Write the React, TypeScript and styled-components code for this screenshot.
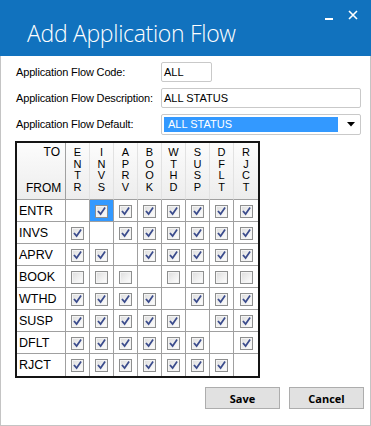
import React from "react";
import styled, { createGlobalStyle } from "styled-components";

const Global = createGlobalStyle`
  html, body { margin: 0; padding: 0; background: #ffffff; }
  body { font-family: "Liberation Sans", Arial, sans-serif; }
  * { box-sizing: border-box; }
`;

const Window = styled.div`
  width: 371px;
  height: 426px;
  display: flex;
  flex-direction: column;
  background: #ffffff;
  border-left: 1px solid #c4c4c4;
  border-right: 1px solid #c4c4c4;
  border-bottom: 1px solid #c4c4c4;
`;

const TitleBar = styled.div`
  height: 56px;
  margin: 0 -1px;
  background: #1172be;
  position: relative;
  display: flex;
  align-items: flex-end;
  padding: 0 0 8px 27px;
`;

const Title = styled.div`
  color: #ffffff;
  font-family: "Open Sans", "Segoe UI", sans-serif;
  font-weight: 300;
  font-size: 23px;
  line-height: 30px;
  letter-spacing: -0.3px;
`;

const Controls = styled.div`
  position: absolute;
  top: 10px;
  right: 13px;
  display: flex;
  align-items: flex-start;
  gap: 14px;
`;

const Body = styled.div`
  flex: 1;
  display: flex;
  flex-direction: column;
  padding: 6px 6px 0 14px;
`;

const FormRow = styled.div`
  display: flex;
  align-items: center;
  height: 20px;
  margin-bottom: 6px;
`;

const Label = styled.div`
  width: 146px;
  font-size: 11px;
  letter-spacing: -0.15px;
  color: #000000;
  padding-left: 1px;
`;

const TextBox = styled.div<{ $w: number }>`
  width: ${(p) => p.$w}px;
  height: 20px;
  border: 1px solid #c9c9c9;
  border-radius: 2px;
  font-size: 11px;
  color: #000000;
  display: flex;
  align-items: center;
  padding-left: 2px;
`;

const Select = styled.div`
  width: 200px;
  height: 21px;
  border: 1px solid #c9c9c9;
  border-radius: 2px;
  display: flex;
  align-items: center;
  padding: 0 5px 0 2px;
`;

const SelectValue = styled.div`
  flex: 1;
  height: 15px;
  margin-top: 1px;
  background: #3399ff;
  color: #ffffff;
  font-size: 11px;
  line-height: 15px;
  padding-left: 4px;
  margin-right: 9px;
`;

const Grid = styled.div`
  margin-top: 1px;
  width: 245px;
  display: grid;
  grid-template-columns: 49px repeat(8, 24px);
  grid-template-rows: 57px repeat(8, 22px);
  border: 2px solid #141414;
  background: #ffffff;
`;

const HeadCell = styled.div<{ $last?: boolean }>`
  background: linear-gradient(#fcfcfc, #ededed);
  border-right: ${(p) => (p.$last ? "none" : "1px solid #e2e2e2")};
  border-bottom: 1px solid #a0a0a0;
  font-family: "Liberation Sans Narrow", "Liberation Sans", Arial, sans-serif;
  font-size: 12px;
  color: #000000;
`;

const Corner = styled(HeadCell)`
  display: flex;
  flex-direction: column;
  justify-content: space-between;
  padding: 3px 5px 4px 9px;
  border-right: 1px solid #a0a0a0;
`;

const ToText = styled.div`
  text-align: right;
  line-height: 13px;
`;

const FromText = styled.div`
  line-height: 13px;
`;

const Letters = styled.div`
  display: flex;
  flex-direction: column;
  align-items: center;
  padding-top: 4px;
  font-size: 11px;
  line-height: 11.7px;
`;

const RowHead = styled.div<{ $lastRow?: boolean }>`
  border-right: 1px solid #a0a0a0;
  border-bottom: ${(p) => (p.$lastRow ? "none" : "1px solid #a0a0a0")};
  font-family: "Liberation Sans Narrow", "Liberation Sans", Arial, sans-serif;
  font-size: 12.5px;
  color: #000000;
  display: flex;
  align-items: center;
  padding-left: 2px;
`;

const Cell = styled.div<{ $lastRow?: boolean; $lastCol?: boolean; $sel?: boolean }>`
  border-right: ${(p) => (p.$lastCol ? "none" : "1px solid #a0a0a0")};
  border-bottom: ${(p) => (p.$lastRow ? "none" : "1px solid #a0a0a0")};
  background: ${(p) => (p.$sel ? "#3399ff" : "transparent")};
  display: flex;
  align-items: center;
  justify-content: center;
  padding-top: 1px;
`;

const Box = styled.div`
  width: 13px;
  height: 13px;
  border: 1px solid #8e8f8f;
  background: linear-gradient(135deg, #dcdcdc 0%, #f0f0f0 55%, #ffffff 100%);
  box-shadow: inset 0 0 0 1px #f4f4f4;
  display: flex;
  align-items: center;
  justify-content: center;
`;

const Footer = styled.div`
  display: flex;
  justify-content: flex-end;
  gap: 9px;
  margin-top: 9px;
`;

const Button = styled.div`
  width: 75px;
  height: 22px;
  background: #e1e1e1;
  border: 1px solid #adadad;
  display: flex;
  align-items: center;
  justify-content: center;
  font-family: "Open Sans", "Segoe UI", sans-serif;
  font-weight: 700;
  font-size: 11px;
  color: #000000;
`;

const Check = () => (
  <svg width="9" height="9" viewBox="0 0 9 9">
    <path d="M1.5 4.6 L3.6 7 L7.6 1.2" fill="none" stroke="#3a4b8c" strokeWidth="1.7" strokeLinecap="square" />
  </svg>
);

const CheckBox = ({ checked }: { checked: boolean }) => <Box>{checked ? <Check /> : null}</Box>;

const codes = ["ENTR", "INVS", "APRV", "BOOK", "WTHD", "SUSP", "DFLT", "RJCT"];

export default function App() {
  return (
    <>
      <Global />
      <Window>
        <TitleBar>
          <Title>Add Application Flow</Title>
          <Controls>
            <svg width="10" height="12" viewBox="0 0 10 12">
              <rect x="1" y="8" width="8" height="2" fill="#ffffff" />
            </svg>
            <svg width="10" height="10" viewBox="0 0 10 10">
              <path d="M1 1 L9 9 M9 1 L1 9" stroke="#ffffff" strokeWidth="1.6" />
            </svg>
          </Controls>
        </TitleBar>
        <Body>
          <FormRow>
            <Label>Application Flow Code:</Label>
            <TextBox $w={51}>ALL</TextBox>
          </FormRow>
          <FormRow>
            <Label>Application Flow Description:</Label>
            <TextBox $w={200}>ALL STATUS</TextBox>
          </FormRow>
          <FormRow>
            <Label>Application Flow Default:</Label>
            <Select>
              <SelectValue>ALL STATUS</SelectValue>
              <svg width="8" height="5" viewBox="0 0 8 5">
                <path d="M0 0 H8 L4 4.5 Z" fill="#000000" />
              </svg>
            </Select>
          </FormRow>
          <Grid>
            <Corner>
              <ToText>TO</ToText>
              <FromText>FROM</FromText>
            </Corner>
            {codes.map((c, i) => (
              <HeadCell key={c} $last={i === codes.length - 1}>
                <Letters>
                  {c.split("").map((ch, k) => (
                    <span key={k}>{ch}</span>
                  ))}
                </Letters>
              </HeadCell>
            ))}
            {codes.map((row, r) => (
              <React.Fragment key={row}>
                <RowHead $lastRow={r === codes.length - 1}>{row}</RowHead>
                {codes.map((col, c) => (
                  <Cell
                    key={col}
                    $lastRow={r === codes.length - 1}
                    $lastCol={c === codes.length - 1}
                    $sel={r === 0 && c === 1}
                  >
                    {r === c ? null : <CheckBox checked={row !== "BOOK"} />}
                  </Cell>
                ))}
              </React.Fragment>
            ))}
          </Grid>
          <Footer>
            <Button>Save</Button>
            <Button>Cancel</Button>
          </Footer>
        </Body>
      </Window>
    </>
  );
}
